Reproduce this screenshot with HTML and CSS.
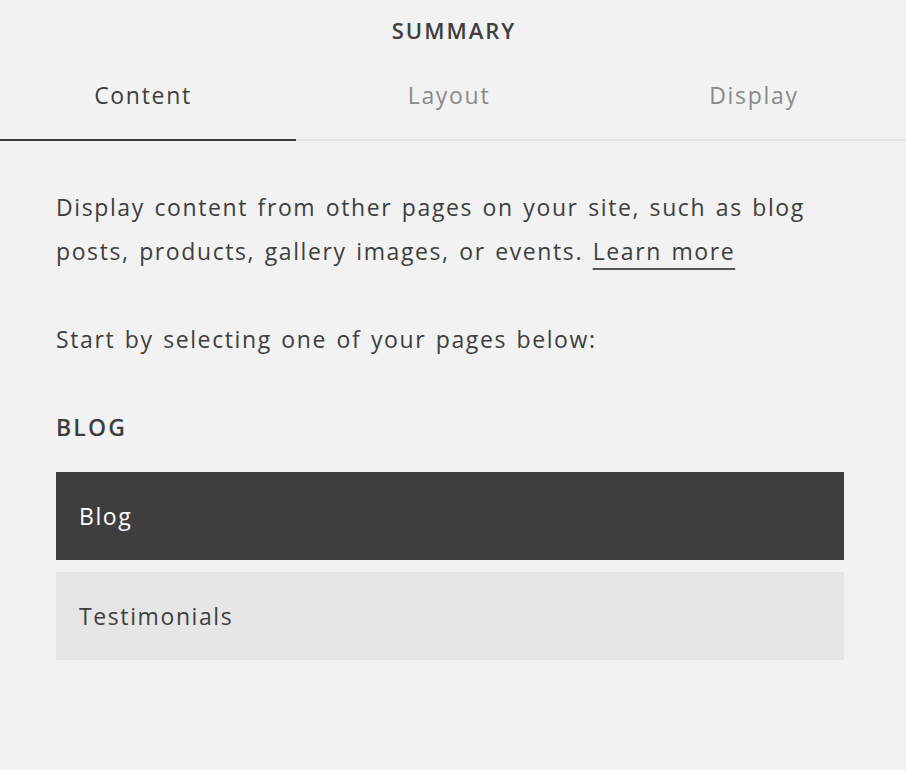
FILE: index.html
```html
<!DOCTYPE html>
<html>
<head>
<meta charset="utf-8">
<link rel="stylesheet" href="styles.css">
</head>
<body>
<div class="panel">
  <header class="title">SUMMARY</header>
  <nav class="tabs">
    <div class="tab active">Content</div>
    <div class="tab">Layout</div>
    <div class="tab">Display</div>
  </nav>
  <main class="body">
    <p class="text">Display content from other pages on your site, such as blog posts, products, gallery images, or events. <a class="link" href="#">Learn more</a></p>
    <p class="text">Start by selecting one of your pages below:</p>
    <h3 class="section">BLOG</h3>
    <div class="list">
      <div class="item selected">Blog</div>
      <div class="item">Testimonials</div>
    </div>
  </main>
</div>
</body>
</html>
```
FILE: styles.css
```css
html, body {
  margin: 0;
  padding: 0;
  background: #f2f2f2;
}
body {
  font-family: "Open Sans", "Liberation Sans", sans-serif;
  color: #3e3e3e;
  width: 906px;
  height: 770px;
  overflow: hidden;
}
.title {
  height: 60px;
  display: flex;
  align-items: center;
  justify-content: center;
  font-size: 22px;
  letter-spacing: 2px;
  font-weight: 600;
  color: #3e3e3e;
  padding-left: 2px;
}
.tabs {
  display: grid;
  grid-template-columns: 296px 306px 1fr;
  border-bottom: 2px solid #e2e2e2;
}
.tab {
  height: 81px;
  display: flex;
  align-items: flex-start;
  justify-content: center;
  padding-top: 20px;
  box-sizing: border-box;
  font-size: 23px;
  line-height: 30px;
  letter-spacing: 1.7px;
  color: #8a8a8a;
  margin-bottom: -2px;
  border-bottom: 2px solid transparent;
}
.tab.active {
  color: #3e3e3e;
  border-bottom-color: #3e3e3e;
  padding-right: 10px;
}
.body {
  padding: 44px 40px 0 56px;
}
.text {
  margin: 0 0 44px 0;
  font-size: 23px;
  line-height: 44px;
  letter-spacing: 1.6px;
  word-spacing: 2px;
}
.link {
  color: #3e3e3e;
  text-decoration: underline;
  text-decoration-color: #555;
  text-decoration-thickness: 1.5px;
  text-underline-offset: 8px;
}
.section {
  margin: 0;
  font-size: 23px;
  line-height: 44px;
  font-weight: 600;
  letter-spacing: 2.2px;
}
.list {
  margin-top: 23px;
  display: flex;
  flex-direction: column;
  gap: 12px;
  width: 788px;
}
.item {
  height: 88px;
  display: flex;
  align-items: center;
  padding-left: 23px;
  font-size: 23px;
  letter-spacing: 1.6px;
  background: #e6e6e6;
  color: #3e3e3e;
}
.item.selected {
  background: #3e3e3e;
  color: #ffffff;
}
```
